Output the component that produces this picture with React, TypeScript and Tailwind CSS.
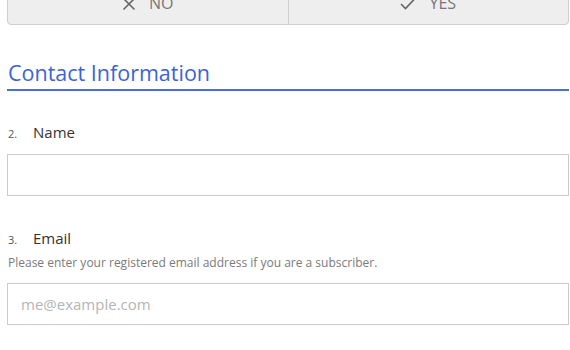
import React from "react";

export default function App() {
  return (
    <div className="w-[570px] h-[350px] overflow-hidden bg-white pl-[7px] pr-[1px]" style={{ fontFamily: "'Open Sans', 'Noto Sans', sans-serif" }}>
      <div className="-mt-[19px] flex h-[44px] rounded-b-[4px] border border-[#cfcfcf] bg-[#eeeeee] text-[#777]">
        <button className="flex flex-1 items-center justify-center gap-[13px] border-r border-[#cfcfcf] text-[16px]">
          <svg width="14" height="14" viewBox="0 0 14 14" className="mt-[1px]">
            <path d="M1.5 1.5 L12.5 12.5 M12.5 1.5 L1.5 12.5" stroke="#666" strokeWidth="1.6" fill="none" />
          </svg>
          <span>NO</span>
        </button>
        <button className="flex flex-1 items-center justify-center gap-[13px] text-[16px]">
          <svg width="16" height="13" viewBox="0 0 16 13">
            <path d="M1 7 L5.5 11.5 L15 1.5" stroke="#666" strokeWidth="1.6" fill="none" />
          </svg>
          <span>YES</span>
        </button>
      </div>

      <h2 className="mt-[33px] pl-[1px] text-[21.5px] leading-[30px] text-[#3b63d6]">Contact Information</h2>
      <div className="mt-[1px] h-[2px] bg-[#4a6fdc]" />

      <div className="mt-[30px] flex items-baseline pl-[1px]">
        <span className="w-[25px] text-[11px] text-[#555]">2.</span>
        <span className="text-[15px] text-[#333]">Name</span>
      </div>
      <div className="mt-[10px] h-[42px] border border-[#cccccc] bg-white" />

      <div className="mt-[31px] flex items-baseline pl-[1px]">
        <span className="w-[25px] text-[11px] text-[#555]">3.</span>
        <span className="text-[15px] text-[#333]">Email</span>
      </div>
      <div className="mt-[5px] pl-[1px] text-[12px] leading-[18px] text-[#7a7a7a]">
        Please enter your registered email address if you are a subscriber.
      </div>
      <div className="mt-[11px] flex h-[42px] items-center border border-[#cccccc] bg-white pl-[13px] text-[15px] text-[#b5b5b5]">
        me@example.com
      </div>
    </div>
  );
}
